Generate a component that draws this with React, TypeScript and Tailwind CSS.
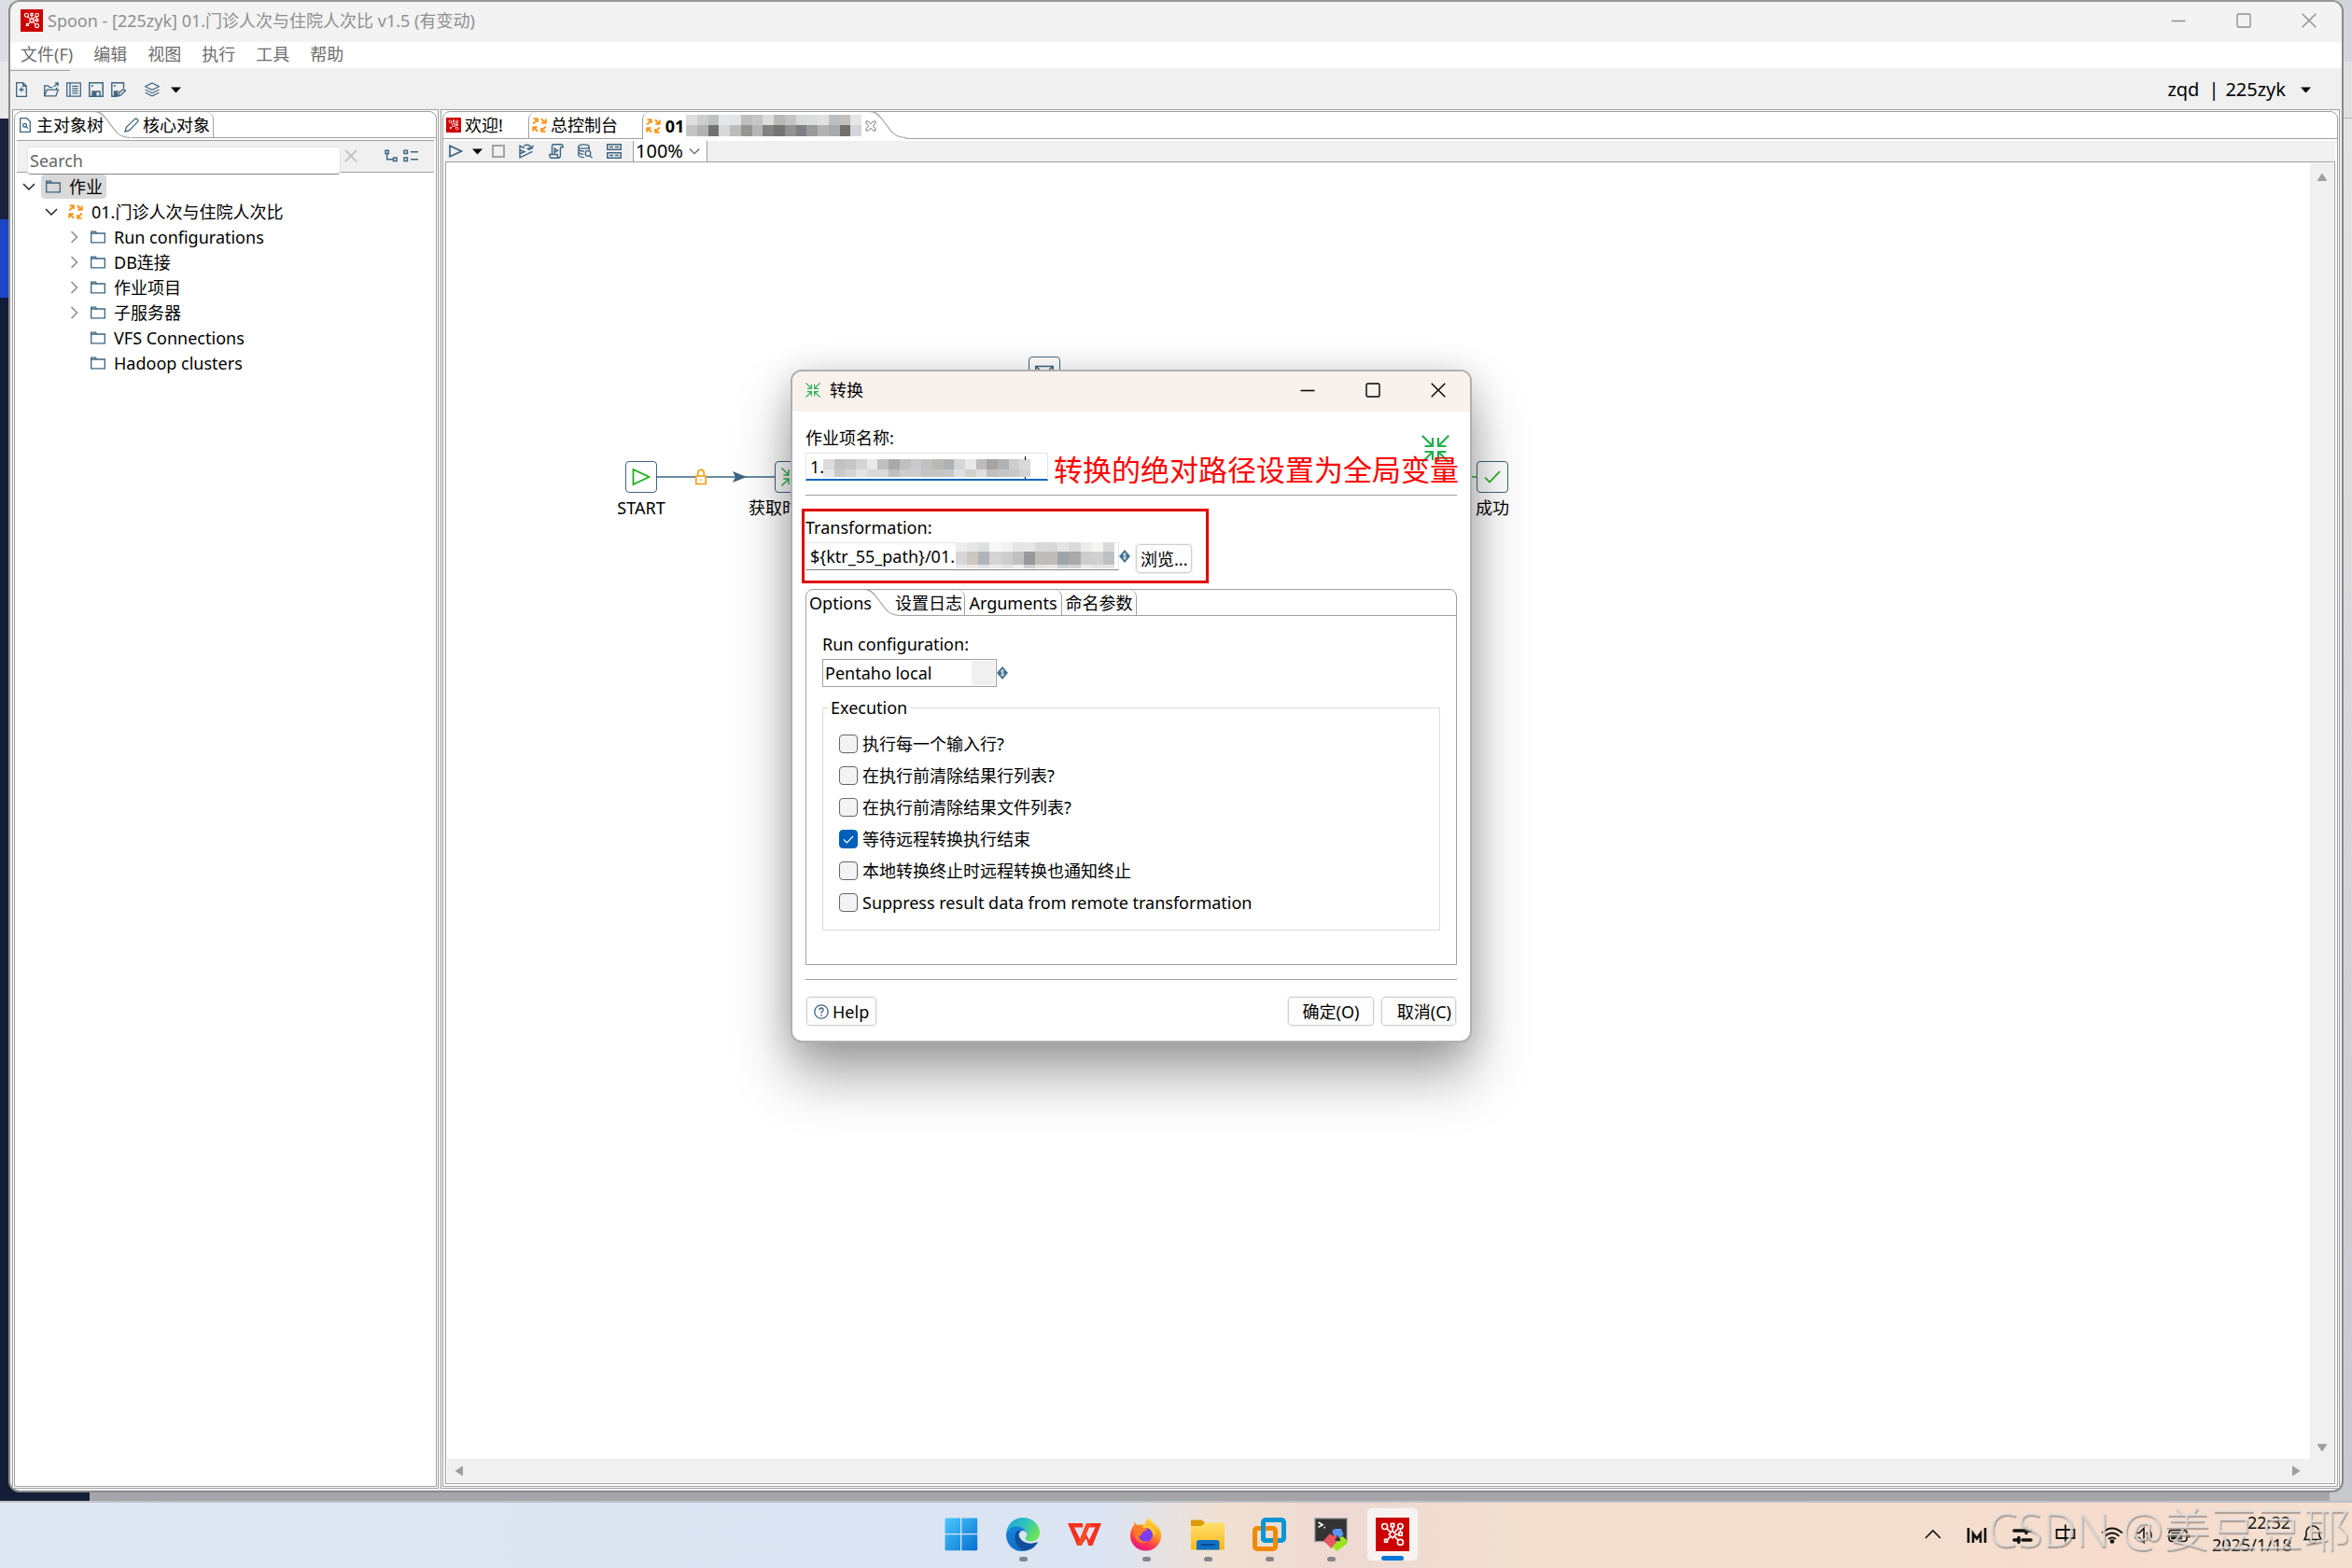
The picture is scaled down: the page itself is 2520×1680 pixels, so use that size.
import React, { useState } from "react";

type IconProps = { className?: string };

const BLUE = "#3d6480";

function SpoonLogo({ className = "" }: IconProps) {
  return (
    <svg viewBox="0 0 24 24" className={className} aria-hidden="true">
      <rect width="24" height="24" fill="#cc0000" />
      <g fill="none" stroke="#fff" strokeWidth="1.100">
        <circle cx="6.400" cy="6.300" r="2" />
        <circle cx="17.600" cy="6.100" r="1.800" />
        <path d="M12 9.500l2.500 2.500L12 14.500 9.500 12z" />
        <circle cx="17.600" cy="17.600" r="2" />
        <rect x="10.900" y="4.300" width="2.200" height="2.200" />
        <rect x="16.600" y="10.600" width="2.200" height="2.200" />
        <rect x="6.400" y="15.600" width="1.900" height="1.900" />
        <path d="M7.800 7.700l2.900 2.900M12 6.500v3M16.400 7.500l-3 3M14.500 12h2.100M13.300 13.300l2.900 2.900M10.600 13.400l-2.300 2.400M17.600 8v2.600" />
      </g>
    </svg>
  );
}

function NewFileIcon() {
  return (
    <svg viewBox="0 0 12 16" className="h-4 w-3" fill="none" stroke={BLUE} strokeWidth="1.3" aria-hidden="true">
      <path d="M.7 .7h7l3.6 3.6v11H.7zM7.7 .7v3.6h3.6M6 5.5v5M3.5 8h5" />
    </svg>
  );
}

function OpenIcon() {
  return (
    <svg viewBox="0 0 16 16" className="size-4" fill="none" stroke={BLUE} strokeWidth="1.3" aria-hidden="true">
      <path d="M.7 14.8V3.8h4l1.4 1.8h3M.7 14.8l2.6-6.6h12l-2.4 6.6zM13.6 8V5.8M10.5 5l4.6-4M11.8 .8h3.4v3.4" />
    </svg>
  );
}

function ListDocIcon() {
  return (
    <svg viewBox="0 0 16 16" className="size-4" fill="none" stroke={BLUE} strokeWidth="1.3" aria-hidden="true">
      <path d="M.7 .8h14.6v14.4H.7zM4 .8v14.4M6.3 4.4h6.4M6.3 6.9h6.4M6.3 9.4h6.4M6.3 11.9h6.4" />
    </svg>
  );
}

function SaveIcon() {
  return (
    <svg viewBox="0 0 16 16" className="size-4" fill="none" stroke={BLUE} strokeWidth="1.5" aria-hidden="true">
      <path d="M.8 .8h14.4v14.4H.8z" />
      <path d="M4 15V10h8v5" />
      <path d="M4.5 10.5h4v4.7h-4z" fill={BLUE} stroke="none" />
      <circle cx="4" cy="4" r="1" fill={BLUE} stroke="none" />
    </svg>
  );
}

function SaveAsIcon() {
  return (
    <svg viewBox="0 0 16 16" className="size-4" fill="none" stroke={BLUE} strokeWidth="1.4" aria-hidden="true">
      <path d="M13.5 6V.8H.8v14.4H6M3.5 15v-5h5" />
      <path d="M4 10.5h3v4.7H4z" fill={BLUE} stroke="none" />
      <circle cx="3.8" cy="4" r="1" fill={BLUE} stroke="none" />
      <path d="M7.5 15l1-3.2 4.8-4.6 2 2-4.8 4.7z" />
    </svg>
  );
}

function LayersIcon() {
  return (
    <svg viewBox="0 0 16 16" className="size-4" fill="none" stroke={BLUE} strokeWidth="1.2" aria-hidden="true">
      <path d="M8 1l7.4 3.7L8 8.4.6 4.7zM.6 8L8 11.7 15.4 8M.6 11.2L8 14.9l7.4-3.7" />
    </svg>
  );
}

function CaretDown({ className = "" }: IconProps) {
  return (
    <svg viewBox="0 0 11 7" className={`h-[7px] w-[11px] ${className}`} aria-hidden="true">
      <path d="M0 .5h11L5.5 6.5z" fill="#000" />
    </svg>
  );
}

function FolderIcon() {
  return (
    <svg viewBox="0 0 16 14" className="h-3.5 w-4" fill="none" stroke={BLUE} strokeWidth="1.3" aria-hidden="true">
      <path d="M.7 12.8V1.2h4.8l1 1.8h8.8v9.800zM.7 3h6" />
    </svg>
  );
}

function JobIcon() {
  return (
    <svg viewBox="0 0 16 16" className="size-4" aria-hidden="true">
      <g fill="none" stroke="#f7981d" strokeWidth="1.900">
        <path d="M1.300 6.500L5.200 2.400M1.500 1.200H6M5.900 .5v4.500" />
        <path d="M9.800 1.200l4.200 4M14.800 1.500v4.600M10.300 5.800h5" />
        <path d="M14.700 9.500l-3.900 4.100M14.500 14.800H10M10.100 15.500V11" />
        <path d="M6.200 14.800l-4.200-4M1.200 14.500V9.900M.7 10.200h5" />
      </g>
    </svg>
  );
}

function TransIcon({ className = "", color = "#2bb357" }: IconProps & { color?: string }) {
  return (
    <svg viewBox="0 0 30 30" className={className} fill="none" stroke={color} strokeWidth="2.200" aria-hidden="true">
      <path d="M.8 .8l10.500 10.500M12 3v9H3.500M29.200 .8L18.700 11.300M18 3v9h8.500M.8 29.200l10.500-10.500M12 27v-9H3.500M29.200 29.200L18.700 18.700M18 27v-9h8.500" />
    </svg>
  );
}

function PencilIcon() {
  return (
    <svg viewBox="0 0 16 16" className="size-4" fill="none" stroke={BLUE} strokeWidth="1.3" aria-hidden="true">
      <path d="M1 15l1.400-4.600L11.600 1.400q1-.9 2 0l1 1q.9 1 0 2L5.500 13.600z" />
    </svg>
  );
}

function DocSearchIcon() {
  return (
    <svg viewBox="0 0 12 16" className="h-4 w-3" fill="none" stroke={BLUE} strokeWidth="1.300" aria-hidden="true">
      <path d="M.7 .7h7l3.600 3.600v11H.7z" />
      <circle cx="5.600" cy="8.200" r="1.900" />
      <path d="M7 9.600l2 2" />
    </svg>
  );
}

function WindowGlyph({ kind }: { kind: "min" | "max" | "close" }) {
  return (
    <svg viewBox="0 0 16 16" className="size-4" fill="none" stroke="currentColor" strokeWidth="1.400" aria-hidden="true">
      {kind === "min" && <path d="M.5 8.500h15" />}
      {kind === "max" && <rect x="1" y="1" width="14" height="14" rx="1.500" />}
      {kind === "close" && <path d="M.7 .7l14.600 14.600M15.300 .7L.7 15.300" />}
    </svg>
  );
}

function VarDiamond() {
  return (
    <svg viewBox="0 0 12 14" className="h-3.5 w-3 shrink-0" aria-hidden="true">
      <path d="M6 0l6 7-6 7-6-7z" fill="#47708f" />
      <path d="M7.800 5Q6 3.700 4.800 4.700 4 6 6 6.900 8.300 7.800 7.200 9.200 6 10.200 4.200 9M6 3.200v7.600" fill="none" stroke="#e6eef4" strokeWidth="1" />
    </svg>
  );
}

function TabCurve({ className = "" }: IconProps) {
  return (
    <svg viewBox="0 0 40 30" className={`pointer-events-none h-[30px] w-10 ${className}`} fill="none" stroke="#a0a0a0" strokeWidth="1.200" aria-hidden="true">
      <path d="M0 .5C7 .5 10 3.500 14 8.500l9 12C27 26 32 28.500 40 28.500" />
    </svg>
  );
}

function Mosaic({ rows, heights, className = "" }: { rows: string[][]; heights: string[]; className?: string }) {
  return (
    <span className={`flex flex-col ${className}`} aria-hidden="true">
      {rows.map((row, r) => (
        <span key={r} className={`flex ${heights[r]}`}>
          {row.map((c, i) => (
            <span key={i} className={`h-full flex-1 ${c}`} />
          ))}
        </span>
      ))}
    </span>
  );
}

const tabMosaic = [
  ["bg-[#dededd]", "bg-[#cdcfce]", "bg-[#bfc1c1]", "bg-[#e5e6ea]", "bg-[#e3e4e6]", "bg-[#bfbfbf]", "bg-[#c6c6c6]", "bg-[#dcdcdc]", "bg-[#bab8b5]", "bg-[#c4c4c4]", "bg-[#d9dadc]", "bg-[#dbdcdc]", "bg-[#e0e1e1]", "bg-[#bcc0c4]", "bg-[#c1c0be]", "bg-[#e6e8e8]"],
  ["bg-[#c5c5c5]", "bg-[#b2b3b4]", "bg-[#737371]", "bg-[#d8d8d8]", "bg-[#bcbcbc]", "bg-[#979591]", "bg-[#b6b6b6]", "bg-[#818282]", "bg-[#767573]", "bg-[#929292]", "bg-[#7e8083]", "bg-[#9b9b9b]", "bg-[#b5b2b3]", "bg-[#a6abaf]", "bg-[#746f6b]", "bg-[#d4d6d9]"],
];

const nameMosaic = [
  ["bg-[#dcdcdd]", "bg-[#c3c2c1]", "bg-[#c3c7ca]", "bg-[#d4d4d4]", "bg-[#e7e8ea]", "bg-[#c0c0c0]", "bg-[#a8a8a5]", "bg-[#c2bfbf]", "bg-[#c6cbce]", "bg-[#c1c1c0]", "bg-[#bbb8b3]", "bg-[#aeb2b5]", "bg-[#d6d6d6]", "bg-[#e8e9ea]", "bg-[#bdbcbb]", "bg-[#a5a4a0]", "bg-[#afb3b5]", "bg-[#d0cdcd]", "bg-[#dadadc]"],
  ["bg-[#e8e8e8]", "bg-[#c9c9c9]", "bg-[#d4d4d4]", "bg-[#e4e4e3]", "bg-[#d8d8d8]", "bg-[#d8d9d9]", "bg-[#c1bfbe]", "bg-[#cccccc]", "bg-[#cdcdcd]", "bg-[#c4c4c4]", "bg-[#c5c5c5]", "bg-[#c8c8c8]", "bg-[#dde1e4]", "bg-[#d2cfcd]", "bg-[#dfdfdf]", "bg-[#c0bfbe]", "bg-[#c5c5c5]", "bg-[#cbc7c7]", "bg-[#d0d5da]"],
];

const pathMosaic = [
  ["bg-[#eeeeee]", "bg-[#e6e6e6]", "bg-[#dfe0e1]", "bg-[#f7f7f5]", "bg-[#f2f2f2]", "bg-[#e5e5e5]", "bg-[#e6e6e6]", "bg-[#d8d9da]", "bg-[#d8d8d8]", "bg-[#e4e4e4]", "bg-[#d9dadb]", "bg-[#ededed]", "bg-[#f5f5f3]", "bg-[#d8dadb]"],
  ["bg-[#d8d7d6]", "bg-[#cdc7c2]", "bg-[#b0b4ba]", "bg-[#d4d4d4]", "bg-[#cdcdcd]", "bg-[#c1c0bf]", "bg-[#98989c]", "bg-[#bfbdb9]", "bg-[#bebdb9]", "bg-[#9ea5a9]", "bg-[#abaaa8]", "bg-[#cdcdcd]", "bg-[#d0d0d0]", "bg-[#bdc0c3]"],
  ["bg-[#ececec]", "bg-[#efe8e4]", "bg-[#e0e3e6]", "bg-[#ebebeb]", "bg-[#e4e4e4]", "bg-[#eeeeee]", "bg-[#cecfd1]", "bg-[#e3e3e1]", "bg-[#e7e7e4]", "bg-[#ccd1d4]", "bg-[#d3d4d4]", "bg-[#ebebeb]", "bg-[#e4e4e4]", "bg-[#e6e6e6]"],
];

type TreeNode = { label: string; icon: "folder" | "job"; open?: boolean; leaf?: boolean; selected?: boolean; children?: TreeNode[] };

const tree: TreeNode[] = [
  {
    label: "作业",
    icon: "folder",
    open: true,
    selected: true,
    children: [
      {
        label: "01.门诊人次与住院人次比",
        icon: "job",
        open: true,
        children: [
          { label: "Run configurations", icon: "folder" },
          { label: "DB连接", icon: "folder" },
          { label: "作业项目", icon: "folder" },
          { label: "子服务器", icon: "folder" },
          { label: "VFS Connections", icon: "folder", leaf: true },
          { label: "Hadoop clusters", icon: "folder", leaf: true },
        ],
      },
    ],
  },
];

function TreeItem({ node }: { node: TreeNode }) {
  return (
    <li role="treeitem" aria-expanded={node.open}>
      <div className="flex h-[27px] items-center">
        <span className="flex w-[26px] items-center justify-center">
          {!node.leaf && (
            <svg viewBox="0 0 14 14" className="size-3.5" fill="none" stroke={node.open ? "#222" : "#8a8a8a"} strokeWidth="1.500" aria-hidden="true">
              {node.open ? <path d="M1 4l6 6 6-6" /> : <path d="M4.500 1l6 6-6 6" />}
            </svg>
          )}
        </span>
        <span className={`flex h-[26px] items-center gap-[9px] rounded-sm pr-1 pl-[5px] ${node.selected ? "bg-[#d9d9d9]" : ""}`}>
          {node.icon === "folder" ? <FolderIcon /> : <JobIcon />}
          <span className="whitespace-nowrap">{node.label}</span>
        </span>
      </div>
      {node.children && (
        <ul role="group" className="pl-6">
          {node.children.map((c) => (
            <TreeItem key={c.label} node={c} />
          ))}
        </ul>
      )}
    </li>
  );
}

function TitleBar() {
  return (
    <header className="flex h-[43px] shrink-0 items-center bg-[#f3f3f3] pb-1 pl-[11px] text-[#8f8f8f]">
      <SpoonLogo className="size-6" />
      <h1 className="ml-[5px] flex-1">Spoon - [225zyk] 01.门诊人次与住院人次比 v1.5 (有变动)</h1>
      <div className="flex">
        {(["min", "max", "close"] as const).map((k) => (
          <button key={k} type="button" aria-label={k} className="flex h-9 w-[70px] items-center justify-center">
            <WindowGlyph kind={k} />
          </button>
        ))}
      </div>
    </header>
  );
}

function MainToolbar() {
  return (
    <div className="flex h-11 shrink-0 flex-col bg-[#f0f0f0]">
      <div className="mt-0.5 h-px w-16 bg-[#a0a0a0]" />
      <div className="flex h-10 items-center pl-1.5">
        <button type="button" aria-label="新建"><NewFileIcon /></button>
        <button type="button" aria-label="打开" className="ml-[18px]"><OpenIcon /></button>
        <button type="button" aria-label="探索资源库" className="ml-2"><ListDocIcon /></button>
        <button type="button" aria-label="保存" className="ml-2"><SaveIcon /></button>
        <button type="button" aria-label="另存为" className="ml-2"><SaveAsIcon /></button>
        <button type="button" aria-label="视角" className="ml-5 flex items-center gap-3"><LayersIcon /><CaretDown /></button>
        <button type="button" className="ml-auto flex items-center gap-3 pr-[33px] text-xl">
          <span>zqd</span>
          <span className="w-1 -indent-0.5">|</span>
          <span>225zyk</span>
          <CaretDown className="ml-1" />
        </button>
      </div>
    </div>
  );
}

function LeftPanel() {
  return (
    <aside className="flex w-[457px] shrink-0 flex-col border border-[#a0a0a0] bg-white p-px">
      <div className="flex min-h-0 flex-1 flex-col rounded-t-lg border border-[#a0a0a0]">
        <div role="tablist" className="flex h-7 shrink-0">
          <button role="tab" aria-selected="true" type="button" className="relative flex h-7 w-[117px] items-center gap-1.5 pl-[5px]">
            <DocSearchIcon />
            主对象树
            <TabCurve className="absolute -top-px left-[84px]" />
          </button>
          <button role="tab" aria-selected="false" type="button" className="ml-2 flex h-7 items-center gap-1 rounded-tr-lg border-r border-b border-[#a0a0a0] pr-[3px] pl-0">
            <span className="-ml-2"><PencilIcon /></span>
            核心对象
          </button>
          <div className="flex-1 border-b border-[#a0a0a0]" />
        </div>
        <div className="mx-0.5 mt-0.5 flex h-[35px] shrink-0 items-start border-y border-[#a0a0a0] bg-[#f0f0f0] pl-[11px]">
          <input
            type="text"
            aria-label="Search"
            placeholder="Search"
            className="mt-1.5 h-[30px] w-[336px] shrink-0 rounded-sm border border-[#e4e4e4] border-b-[#868686] bg-white px-0.5 placeholder:text-[#666] focus:outline-none"
          />
          <button type="button" aria-label="清除" className="mt-[9px] ml-1 text-[#c4c4c4]">
            <svg viewBox="0 0 14 14" className="size-3.5" fill="none" stroke="currentColor" strokeWidth="2" aria-hidden="true"><path d="M1 1l12 12M13 1L1 13" /></svg>
          </button>
          <button type="button" aria-label="展开全部" className="mt-[9px] ml-7">
            <svg viewBox="0 0 16 14" className="h-3.5 w-4" fill="none" stroke={BLUE} strokeWidth="1.500" aria-hidden="true"><path d="M2 1.200h3.300v3.300H2zM10.500 9h3.500v3.500h-3.500zM3.600 4.500v6.300h7" /></svg>
          </button>
          <button type="button" aria-label="折叠全部" className="mt-[9px] ml-[5px]">
            <svg viewBox="0 0 16 14" className="h-3.5 w-4" fill="none" stroke={BLUE} strokeWidth="1.500" aria-hidden="true"><path d="M1 1.200h3.500v3.300H1zM1 9h3.500v3.500H1zM8 2.700h8M8 10.700h8" /></svg>
          </button>
        </div>
        <ul role="tree" className="mx-0.5 mt-px min-h-0 flex-1 overflow-hidden">
          {tree.map((n) => (
            <TreeItem key={n.label} node={n} />
          ))}
        </ul>
      </div>
    </aside>
  );
}

function CanvasNode({ label, className, labelClass = "", children }: { label?: string; className: string; labelClass?: string; children: React.ReactNode }) {
  return (
    <div className={`absolute flex w-[90px] flex-col items-center ${className}`}>
      <div className="flex size-[34px] items-center justify-center rounded border border-[#3d6480] bg-white">{children}</div>
      {label && <div className={`flex h-[31px] w-full items-center whitespace-nowrap ${labelClass}`}>{label}</div>}
    </div>
  );
}

function Arrow({ dir }: { dir: "up" | "down" | "left" | "right" }) {
  const d = {
    up: "M6 1.500L11 9q.5 1-.7 1H1.700Q.5 10 1 9z",
    down: "M6 10.500L11 3q.5-1-.7-1H1.700Q.5 2 1 3z",
    left: "M1.500 6L9 1q1-.5 1 .7v8.600q0 1.200-1 .7z",
    right: "M10.500 6L3 1q-1-.5-1 .7v8.600q0 1.200 1 .7z",
  }[dir];
  return (
    <svg viewBox="0 0 12 12" className="size-3" aria-hidden="true">
      <path d={d} fill="#a0a0a0" />
    </svg>
  );
}

function JobCanvas() {
  return (
    <div className="relative min-h-0 min-w-0 overflow-hidden bg-white">
      <svg className="absolute top-[310px] left-[180px] h-[60px] w-[940px]" viewBox="0 0 940 60" aria-hidden="true">
        <path d="M45 27h130" stroke={BLUE} strokeWidth="1.300" />
        <path d="M127 21l15 6-15 6 3-6z" fill={BLUE} />
        <path d="M880 27h46" stroke="#1fb01f" strokeWidth="1.300" />
        <rect x="87.800" y="26" width="10.400" height="8.500" fill="#fff" stroke="#f7a11d" strokeWidth="1.700" />
        <path d="M89.800 26v-3.500a3.200 3.200 0 0 1 6.400 0V26" fill="none" stroke="#f7a11d" strokeWidth="1.700" />
        <rect x="92.300" y="29.500" width="1.500" height="1.500" fill="#f7a11d" />
      </svg>
      <CanvasNode label="START" labelClass="justify-center" className="top-[320px] left-[164px]">
        <svg viewBox="0 0 20 20" className="size-5" fill="none" stroke="#1fb01f" strokeWidth="1.800" aria-hidden="true"><path d="M1.500 2v16l17-8z" /></svg>
      </CanvasNode>
      <CanvasNode label="获取时" className="top-[320px] left-[324px]">
        <TransIcon className="size-5" />
      </CanvasNode>
      <CanvasNode className="top-52 left-[596px]">
        <svg viewBox="0 0 20 16" className="h-4 w-5" fill="none" stroke={BLUE} strokeWidth="1.500" aria-hidden="true"><path d="M.8 1.500h18.400v13.700H.8zM.8 1.500L10 10l9.200-8.500" /></svg>
      </CanvasNode>
      <CanvasNode label="成功" labelClass="justify-center" className="top-[320px] left-[1076px]">
        <svg viewBox="0 0 18 14" className="h-3.5 w-[18px]" fill="none" stroke="#1fb01f" strokeWidth="1.700" aria-hidden="true"><path d="M1 7.500l5 5L17 1" /></svg>
      </CanvasNode>
    </div>
  );
}

function RightPanel() {
  return (
    <main className="flex min-w-0 flex-1 flex-col border border-[#a0a0a0] bg-white p-px">
      <div className="flex min-h-0 flex-1 flex-col rounded-t-lg border border-[#a0a0a0]">
        <div role="tablist" className="flex h-[29px] shrink-0">
          <button role="tab" aria-selected="false" type="button" className="flex w-[91px] items-center gap-1 border-b border-[#a0a0a0] pl-[3px]">
            <SpoonLogo className="size-4" />
            欢迎!
          </button>
          <button role="tab" aria-selected="false" type="button" className="flex w-[122px] items-center gap-1 rounded-tl-lg border-b border-l border-[#a0a0a0] pl-[3px]">
            <JobIcon />
            总控制台
          </button>
          <button role="tab" aria-selected="true" type="button" className="relative flex w-[282px] items-center rounded-tl-lg border-l border-[#a0a0a0] pl-[3px] font-bold">
            <JobIcon />
            <span className="ml-[3px] w-6">01</span>
            <Mosaic rows={tabMosaic} heights={["h-[11px]", "h-3"]} className="w-[188px]" />
            <svg viewBox="0 0 12 12" className="ml-1 size-3" fill="none" stroke="#777" strokeWidth="1" aria-hidden="true">
              <path d="M1 1h2.500L6 3.800 8.500 1H11v2.500L8.200 6 11 8.500V11H8.500L6 8.200 3.500 11H1V8.500L3.800 6 1 3.500z" />
            </svg>
            <TabCurve className="absolute -top-px left-[242px]" />
          </button>
          <div className="flex-1 border-b border-[#a0a0a0]" />
        </div>
        <div className="mx-0.5 mt-0.5 flex h-[22px] shrink-0 items-center bg-[#f0f0f0] pl-1">
          <button type="button" aria-label="运行">
            <svg viewBox="0 0 15 14" className="h-3.5 w-[15px]" fill="none" stroke={BLUE} strokeWidth="1.700" aria-hidden="true"><path d="M1 1.200v11.600L13.500 7z" /></svg>
          </button>
          <button type="button" aria-label="运行选项" className="ml-2.5 flex"><CaretDown /></button>
          <button type="button" aria-label="停止" className="ml-2.5 size-3.5 border-2 border-[#a3a3a3]" />
          <button type="button" aria-label="重放" className="ml-[15px]">
            <svg viewBox="0 0 16 16" className="size-4" fill="none" stroke={BLUE} strokeWidth="1.400" aria-hidden="true"><path d="M6 4.500L1 2.300v12.500L14.500 8.300M1.500 7l4.500 1.600L1.500 10.500M8.500 5.200l3.500 1.500M5.500 2Q11-.3 13.500 4.500M9.800 4.700l4 .6 1.600-3.600" /></svg>
          </button>
          <button type="button" aria-label="脚本" className="ml-4">
            <svg viewBox="0 0 16 16" className="size-4" fill="none" stroke={BLUE} strokeWidth="1.400" aria-hidden="true"><path d="M3.500 11V3q0-2.200 2-2.200h7.500q2.200 0 2.200 3h-3M12.400 3.800v9q0 2.400-2.200 2.400H2.500Q.8 15 .8 11.500h8.400q0 3.500 1.500 3.700M6 5v4.500L9.500 7.200z" /></svg>
          </button>
          <button type="button" aria-label="数据库" className="ml-[15px]">
            <svg viewBox="0 0 16 16" className="size-4" fill="none" stroke={BLUE} strokeWidth="1.300" aria-hidden="true"><ellipse cx="6.500" cy="3" rx="5.700" ry="2.200" /><path d="M.8 3v9.500q1 2 6 2.200M12.200 3v4M.8 6.200q2 2 6.500 2M.8 9.500q2 1.800 5.500 1.900" /><circle cx="11" cy="10.500" r="2.800" /><path d="M13 12.700l2.500 2.600" /></svg>
          </button>
          <button type="button" aria-label="结果" className="ml-[15px]">
            <svg viewBox="0 0 16 16" className="size-4" fill="none" stroke={BLUE} strokeWidth="1.500" aria-hidden="true"><path d="M.8 .8h14.400v5.400H.8zM.8 9.800h14.400v5.400H.8zM3 3.500h4M9 3.500h4M3 12.500h4M9 12.500h4" /></svg>
          </button>
          <div className="relative ml-3 flex h-[22px] items-center border-x border-[#a0a0a0] bg-white">
            <select aria-label="缩放" className="h-[22px] w-[78px] appearance-none bg-transparent pl-0.5 text-xl leading-5 focus:outline-none">
              <option>100%</option>
            </select>
            <svg viewBox="0 0 12 12" className="pointer-events-none absolute right-[7px] size-3" fill="none" stroke="#666" strokeWidth="1.300" aria-hidden="true"><path d="M.8 3.500L6 8.700l5.200-5.200" /></svg>
          </div>
        </div>
        <div className="mx-0.5 mb-0.5 grid min-h-0 flex-1 grid-cols-[1fr_26px] grid-rows-[1fr_26px] border border-[#a0a0a0]">
          <JobCanvas />
          <div className="mt-px mr-px flex flex-col items-center justify-between bg-[#f0f0f0] pt-[9px] pb-1.5">
            <Arrow dir="up" />
            <Arrow dir="down" />
          </div>
          <div className="mb-px ml-px flex items-center justify-between bg-[#f0f0f0] pr-[9px] pl-[7px]">
            <Arrow dir="left" />
            <Arrow dir="right" />
          </div>
          <div className="mr-px mb-px bg-[#f0f0f0]" />
        </div>
      </div>
    </main>
  );
}

const checks = [
  { id: "every-row", label: "执行每一个输入行?", on: false },
  { id: "clear-rows", label: "在执行前清除结果行列表?", on: false },
  { id: "clear-files", label: "在执行前清除结果文件列表?", on: false },
  { id: "wait", label: "等待远程转换执行结束", on: true },
  { id: "abort", label: "本地转换终止时远程转换也通知终止", on: false },
  { id: "suppress", label: "Suppress result data from remote transformation", on: false },
];

function CheckRow({ id, label, on }: { id: string; label: string; on: boolean }) {
  const [checked, setChecked] = useState(on);
  return (
    <div className="flex h-[34px] items-center gap-[5px]">
      <span className="relative flex size-5">
        <input
          id={id}
          type="checkbox"
          checked={checked}
          onChange={(e) => setChecked(e.target.checked)}
          className="size-5 appearance-none rounded border border-[#666] bg-[#f3f3f3] checked:border-[#005fb8] checked:bg-[#005fb8]"
        />
        {checked && (
          <svg viewBox="0 0 20 20" className="pointer-events-none absolute inset-0 size-5" fill="none" stroke="#fff" strokeWidth="1.200" aria-hidden="true"><path d="M5 10.500l3.300 3.300L15 7" /></svg>
        )}
      </span>
      <label htmlFor={id}>{label}</label>
    </div>
  );
}

const btn = "flex h-[31px] items-center rounded border border-[#d0d0d0] bg-[#fdfdfd] outline outline-[#f0f0f0]";

function TransformationDialog() {
  return (
    <div
      role="dialog"
      aria-label="转换"
      className="absolute top-[396px] left-[847px] flex w-[730px] flex-col overflow-hidden rounded-xl border-2 border-[#b0b0b0] bg-white shadow-[0_36px_60px_rgba(0,0,0,0.34),0_4px_36px_rgba(0,0,0,0.16)]"
    >
      <header className="flex h-[43px] items-center bg-[#f9f1ec] pb-1 pl-3.5">
        <TransIcon className="size-4" />
        <h2 className="ml-2.5 flex-1">转换</h2>
        <div className="flex gap-[54px] pr-[26px]">
          {(["min", "max", "close"] as const).map((k) => (
            <button key={k} type="button" aria-label={k}><WindowGlyph kind={k} /></button>
          ))}
        </div>
      </header>
      <div className="flex flex-col px-3.5">
        <div className="flex h-[90px] flex-col border-b border-[#a0a0a0] pt-[13px]">
          <div className="flex h-[29px] items-center justify-between">
            <label htmlFor="entry-name">作业项名称:</label>
            <div className="mt-6 mr-2"><TransIcon className="size-[30px]" color="#21b14c" /></div>
          </div>
          <div className="relative mt-0.5 flex h-[30px] items-center">
            <input id="entry-name" type="text" defaultValue="1." className="h-[30px] w-[260px] border border-b-2 border-[#e4e4e4] border-b-[#0067c0] bg-white px-1 focus:outline-none" />
            <Mosaic rows={nameMosaic} heights={["h-[11px]", "h-2"]} className="absolute top-[7px] left-[19px] w-[222px]" />
            <span className="absolute top-1 left-[235px] h-1 w-px bg-black" />
            <span className="absolute bottom-0.5 left-[235px] h-0.5 w-px bg-black" />
            <p className="mt-1.5 ml-1.5 text-[31px] leading-[31px] whitespace-nowrap text-[#ff0000]">转换的绝对路径设置为全局变量</p>
          </div>
        </div>

        <section className="mt-3.5 -ml-1 flex h-20 w-[436px] flex-col border-3 border-[#e00000] pl-px">
          <label htmlFor="trans-path" className="flex h-[33px] items-center">Transformation:</label>
          <div className="relative flex h-[34px] items-start">
            <input id="trans-path" type="text" defaultValue="${ktr_55_path}/01." className="h-[30px] w-[336px] border border-[#e4e4e4] border-b-[#868686] bg-white px-1 focus:outline-none" />
            <Mosaic rows={pathMosaic} heights={["h-2.5", "h-3.5", "h-1"]} className="absolute top-0 left-[161px] w-[170px]" />
            <span className="mt-2 flex"><VarDiamond /></span>
            <button type="button" className={`mt-0.5 ml-1.5 px-1 ${btn}`}>浏览...</button>
          </div>
        </section>

        <section className="mt-1.5 flex h-[403px] flex-col rounded-t-lg border border-[#a0a0a0]">
          <div role="tablist" className="flex h-7 shrink-0">
            <button role="tab" aria-selected="true" type="button" className="relative w-[90px] pl-[3px] text-left">
              Options
              <TabCurve className="absolute -top-px left-[61px]" />
            </button>
            <div className="w-[11px]" />
            <button role="tab" aria-selected="false" type="button" className="w-[69px] rounded-tr-lg border-r border-b border-[#a0a0a0]">
              <span className="-ml-2 whitespace-nowrap">设置日志</span>
            </button>
            <button role="tab" aria-selected="false" type="button" className="w-[104px] rounded-tr-lg border-r border-b border-[#a0a0a0]">Arguments</button>
            <button role="tab" aria-selected="false" type="button" className="w-20 rounded-tr-lg border-r border-b border-[#a0a0a0]">命名参数</button>
            <div className="flex-1 border-b border-[#a0a0a0]" />
          </div>
          <div className="flex flex-col px-[17px] pt-4">
            <label htmlFor="run-config" className="flex h-[27px] items-center">Run configuration:</label>
            <div className="mt-[3px] flex h-[30px] items-center">
              <span className="relative flex">
                <select id="run-config" className="h-[30px] w-[187px] appearance-none border border-[#a0a0a0] bg-white px-0.5 focus:outline-none">
                  <option>Pentaho local</option>
                </select>
                <span className="pointer-events-none absolute top-0.5 right-0.5 h-[26px] w-[25px] bg-[#f0f0f0]" />
              </span>
              <VarDiamond />
            </div>
            <fieldset className="mt-[9px] h-[252px] border border-[#dcdcdc] px-[17px]">
              <legend className="-ml-3 px-[3px] leading-[27px]">Execution</legend>
              <div className="mt-2">
                {checks.map((c) => (
                  <CheckRow key={c.id} {...c} />
                ))}
              </div>
            </fieldset>
          </div>
        </section>

        <div className="mt-[15px] h-px bg-[#a0a0a0]" />
        <footer className="mt-[18px] mb-4 flex gap-2 px-px">
          <button type="button" className={`mr-auto gap-1 px-[7px] ${btn}`}>
            <svg viewBox="0 0 16 16" className="size-4" fill="none" stroke={BLUE} strokeWidth="1.300" aria-hidden="true"><circle cx="8" cy="8" r="7.200" /><path d="M5.800 6.200Q6 4 8 4t2.200 2Q10.200 7.300 8 8.300v1.500M8 11v1.400" /></svg>
            Help
          </button>
          <button type="button" className={`w-[92px] justify-center ${btn}`}>确定(O)</button>
          <button type="button" className={`w-20 justify-end pr-1 ${btn}`}>取消(C)</button>
        </footer>
      </div>
    </div>
  );
}

function WindowsIcon() {
  return (
    <svg viewBox="0 0 36 36" className="size-9" aria-hidden="true">
      <defs><linearGradient id="win" x1="0" y1="0" x2="1" y2="1"><stop offset="0" stopColor="#4cc8fb" /><stop offset="1" stopColor="#0470d2" /></linearGradient></defs>
      <path d="M1.500 .5h15.500v16.500H.5V1.500q0-1 1-1zM18.300 .5h15.700q1.200 0 1.200 1v15.500H18.300zM.5 18.300h16.500v17H1.500q-1 0-1-1zM18.300 18.300h16.900v16q0 1-1.200 1H18.300z" fill="url(#win)" />
    </svg>
  );
}

function EdgeIcon() {
  return (
    <svg viewBox="0 0 36 36" className="size-9" aria-hidden="true">
      <defs>
        <linearGradient id="e1" x1="0" y1="0" x2="1" y2=".5"><stop offset="0" stopColor="#1f9fd8" /><stop offset=".55" stopColor="#2fc2bf" /><stop offset="1" stopColor="#6be35a" /></linearGradient>
        <linearGradient id="e2" x1="0" y1="0" x2="0" y2="1"><stop offset="0" stopColor="#1583d8" /><stop offset="1" stopColor="#0f6fc8" /></linearGradient>
      </defs>
      <path d="M0 17C1 7 8.500 0 18 0c10 0 18 7 18 16 0 6-4.500 9.500-9.500 9.500-4 0-6-1.500-6-3 0-1 1.600-2 1.600-5C22 13 18 10 12.500 10 6 10 1 13 0 17z" fill="url(#e1)" />
      <path d="M0 18C1 12.500 6 9.500 11 9.500c6.500 0 11 3.500 11 8 0-2-2-3.600-4-3.600-3 0-5 3-5 6.600 0 8 7 12.500 13 11.500-3 2.600-6 4-9 4C7 36 0 28.500 0 18z" fill="url(#e2)" />
      <path d="M11.500 14.500C9.500 17 9 20 9.500 23.500 10.700 31 17 36 22 35.300c5-.9 9-4 11.700-8.300.4-.8-.3-1-1-.7-7 3.200-15.700 1-18.700-6-.8-2.500 0-5 2-6.300-1.500-.5-3.300-.3-4.500.5z" fill="#114f9c" />
    </svg>
  );
}

function WpsIcon() {
  return (
    <svg viewBox="0 0 36 24" className="h-6 w-9" aria-hidden="true">
      <path d="M0 0h16v4.500H7l6.200 12.500L20 0h16L26.500 24h-4.200L19.800 16 14.500 24h-4.300z" fill="#f5301f" />
      <path d="M21.500 4.500l-2.200 6.200 3.700 7.200 6.500-13.400z" fill="#e3e6ef" />
      <path d="M20 0h5L14.800 24h-4.600z" fill="#ff4a26" />
    </svg>
  );
}

function FirefoxIcon() {
  return (
    <svg viewBox="0 0 36 36" className="size-9" aria-hidden="true">
      <defs>
        <linearGradient id="f1" x1=".8" y1="0" x2=".3" y2="1"><stop offset="0" stopColor="#fff04a" /><stop offset=".4" stopColor="#ff9a20" /><stop offset=".75" stopColor="#ff3750" /><stop offset="1" stopColor="#e0128a" /></linearGradient>
      </defs>
      <path d="M21.500 0c1 5 9 7 12 14.500 3 10-4 21-15.500 21C8 35.500 1 28 1 19.500 1 14 3 10.500 5 8l.5-3.500L8.500 8c2.500-1.300 6-1 8 0 .5-3.500 2.500-6.500 5-8z" fill="url(#f1)" />
      <circle cx="17.500" cy="18.500" r="7.500" fill="#7a3df0" />
      <path d="M6 9c3-1.500 7-.5 9 2.500h4.500c-.5 3-4 3-5.500 4.500-.5 3-2.500 3-4 4.500 1 4.500 6 6 9.500 4.500-3 4-11 2.500-13.500-3.500C4.500 17 4 13 6 9z" fill="#ff7a28" />
      <path d="M15 10.500c6-3 12 2 11.500 8" fill="none" stroke="#ffc933" strokeWidth="3" />
    </svg>
  );
}

function ExplorerIcon() {
  return (
    <svg viewBox="0 0 36 36" className="size-9" aria-hidden="true">
      <defs><linearGradient id="x1" x1="0" y1="0" x2="0" y2="1"><stop offset="0" stopColor="#ffe06e" /><stop offset="1" stopColor="#fcb918" /></linearGradient></defs>
      <path d="M0 2.500h11.500l3.500 3V12H0z" fill="#dc9a08" />
      <path d="M0 9h11l4-3.500h19.500Q36 5.500 36 7v26q0 1.500-1.500 1.500h-33Q0 34.500 0 33z" fill="url(#x1)" />
      <path d="M6 34.500V27q0-3 3-3h18.500q3 0 3 3v7.500z" fill="#1070c4" />
      <path d="M11.500 29h13.500" stroke="#0a4a8c" strokeWidth="1.800" strokeLinecap="round" />
    </svg>
  );
}

function VmwareIcon() {
  return (
    <svg viewBox="0 0 36 36" className="size-9" fill="none" strokeWidth="5" aria-hidden="true">
      <rect x="11.500" y="2.500" width="22" height="22" rx="2.500" stroke="#0a96d6" />
      <rect x="2.500" y="11.500" width="22" height="22" rx="2.500" stroke="#f08a00" />
      <path d="M11.500 9v13q0 2.500 2.500 2.500h7" stroke="#0a96d6" />
    </svg>
  );
}

function TerminalIcon() {
  return (
    <svg viewBox="0 0 36 36" className="size-9" aria-hidden="true">
      <rect x=".7" y=".7" width="34.600" height="25" fill="#333" stroke="#a8abb0" strokeWidth="1.400" />
      <path d="M4.500 5l4.500 2.700-4.500 2.700M10.500 10.600h1.500" fill="none" stroke="#fff" strokeWidth="1.600" />
      <path d="M10 25l7-8 3 2.500 2-1.500 3 3-3 2.500 3 3-6.500 6.500z" fill="#ea5660" />
      <path d="M20 13l3-1 6 0 2.500 6-4 4-3-3-2 1-3-3.500z" fill="#5a96f5" />
      <path d="M19.500 31l5.500-5.500 1.500 1 2-2.500-1.500-2 3.500-2 4.500 4v4L24 36z" fill="#9be616" />
    </svg>
  );
}

const apps = [
  { name: "开始", icon: <WindowsIcon />, state: "none" },
  { name: "Edge", icon: <EdgeIcon />, state: "running" },
  { name: "WPS", icon: <WpsIcon />, state: "none" },
  { name: "Firefox", icon: <FirefoxIcon />, state: "running" },
  { name: "文件资源管理器", icon: <ExplorerIcon />, state: "running" },
  { name: "VMware", icon: <VmwareIcon />, state: "running" },
  { name: "终端", icon: <TerminalIcon />, state: "running" },
  { name: "Spoon", icon: <SpoonLogo className="size-9" />, state: "active" },
];

function Taskbar() {
  return (
    <footer className="relative z-10 grid h-[72px] shrink-0 grid-cols-[1fr_auto_1fr] items-stretch border-t-2 border-[#bfc0c4] bg-[linear-gradient(90deg,#dfe6f4_0%,#dbe4f2_47%,#f0e0d2_52%,#eed9d2_57%,#f1dfd0_64%,#f3dfcf_80%,#f7dccd_90%,#f3e0d0_100%)]">
      <div />
      <nav className="flex gap-2.5 pl-0.5">
        {apps.map((a) => (
          <button
            key={a.name}
            type="button"
            aria-label={a.name}
            className={`relative mt-[5px] flex h-[58px] w-14 items-center justify-center rounded-md ${a.state === "active" ? "border border-[#e6dfdb] bg-[#f8f3f0]" : ""}`}
          >
            {a.icon}
            {a.state === "running" && <span className="absolute bottom-0 h-[5px] w-[9px] rounded-full bg-[#868589]" />}
            {a.state === "active" && <span className="absolute bottom-0 h-[5px] w-6 rounded-full bg-[#0a78d4]" />}
          </button>
        ))}
      </nav>
      <div className="flex items-center justify-end pr-[30px] text-[#111]">
        <svg viewBox="0 0 24 24" className="mr-[23px] size-6" fill="none" stroke="currentColor" strokeWidth="1.600" aria-hidden="true"><path d="M4 15l8-8 8 8" /></svg>
        <svg viewBox="0 0 24 24" className="mr-[25px] size-6" fill="none" stroke="currentColor" strokeWidth="2.600" aria-hidden="true"><path d="M3 4v16M21 4v16M8 20V10l4 5.500 4-5.500v10" /></svg>
        <svg viewBox="0 0 24 24" className="mr-[22px] size-6" fill="none" stroke="currentColor" strokeWidth="3.500" strokeLinecap="round" aria-hidden="true"><path d="M3 7h18M3 17h4M12 17h9M16 4.500v5M8 14.500v5" /></svg>
        <svg viewBox="0 0 24 24" className="mr-[26px] size-6" fill="none" stroke="currentColor" strokeWidth="1.800" aria-hidden="true"><path d="M2.500 6h19v9h-19zM12 .5v21" /></svg>
        <svg viewBox="0 0 24 24" className="mr-2.5 size-6" fill="none" stroke="currentColor" strokeWidth="1.700" aria-hidden="true"><path d="M1 9.500q11-10 22 0M4.500 13q7.500-7 15 0M8 16.200q4-3.600 8 0" /><circle cx="12" cy="18.500" r="1.500" fill="currentColor" /></svg>
        <svg viewBox="0 0 24 24" className="mr-3.5 size-6" fill="none" stroke="currentColor" strokeWidth="1.600" aria-hidden="true"><path d="M3 9.500h4l5-5v15l-5-5H3zM15 9q2 3 0 6M18 6.500q4 5.500 0 11" /></svg>
        <svg viewBox="0 0 24 24" className="mr-[23px] size-6" fill="none" stroke="currentColor" strokeWidth="1.600" aria-hidden="true"><rect x="1" y="6.500" width="19" height="12" rx="3" /><rect x="4" y="9.500" width="10" height="6" fill="currentColor" /><path d="M22.300 10.500v4" strokeWidth="2" /></svg>
        <time className="mr-3 mb-1 flex w-[84px] flex-col text-right leading-6">
          <span>22:32</span>
          <span>2025/1/18</span>
        </time>
        <svg viewBox="0 0 24 24" className="size-6" fill="none" stroke="currentColor" strokeWidth="1.600" aria-hidden="true"><path d="M3 16.500l2-4V9a7 7 0 0 1 14 0v3.500l2 4zM9 17q0 3.500 3 3.500t3-3.500" /></svg>
      </div>
      <p className="pointer-events-none absolute right-0.5 bottom-3 text-[50px] leading-[60px] font-light whitespace-nowrap text-[#e4dfdc]/80 [text-shadow:1px_2px_1px_rgba(140,130,125,0.7)]">
        CSDN @姜豆豆耶
      </p>
    </footer>
  );
}

export default function App() {
  return (
    <div className="relative flex h-screen w-full flex-col overflow-hidden bg-[#a5a6aa] font-['Noto_Sans','Noto_Sans_CJK_SC',sans-serif] text-[18px] leading-6 text-black">
      <div className="absolute inset-y-0 left-0 flex w-24 flex-col" aria-hidden="true">
        <div className="h-[66px] bg-[#dcdde4]" />
        <div className="h-[61px] bg-[#e9e9ea]" />
        <div className="h-[108px] bg-[#18223f]" />
        <div className="h-[84px] bg-[#1d45c6]" />
        <div className="flex-1 bg-[#131d38]" />
      </div>
      <div className="absolute inset-y-0 right-0 flex w-6 flex-col" aria-hidden="true">
        <div className="h-[66px] bg-[#d4d5dc]" />
        <div className="h-[61px] border-b border-[#b8b8ba] bg-[#e0e0e2]" />
        <div className="flex-1 bg-[linear-gradient(180deg,#e4e4e6,#c6c7cc)]" />
      </div>
      <div className="relative mx-[9px] mb-[9px] flex min-h-0 flex-1 flex-col overflow-hidden rounded-xl border-2 border-[#8a8a8a] border-t-[#969696] bg-[#f0f0f0]">
        <TitleBar />
        <nav className="flex h-7 shrink-0 items-center gap-[22px] bg-white pb-0.5 pl-[11px] text-[#6d6d6d]">
          {["文件(F)", "编辑", "视图", "执行", "工具", "帮助"].map((m) => (
            <button key={m} type="button">{m}</button>
          ))}
        </nav>
        <MainToolbar />
        <div className="flex min-h-0 flex-1 gap-0.5 px-0.5 pb-0.5">
          <LeftPanel />
          <RightPanel />
        </div>
      </div>
      <TransformationDialog />
      <Taskbar />
    </div>
  );
}
